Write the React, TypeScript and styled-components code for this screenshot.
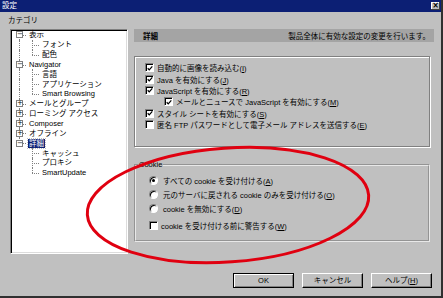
import styled, { createGlobalStyle } from 'styled-components';

const GlobalStyle = createGlobalStyle`
  html, body { margin: 0; padding: 0; background: #c0c0c0; }
  body {
    font-family: "Liberation Sans", "Noto Sans CJK JP", sans-serif;
    font-size: 7.5px;
    color: #000;
  }
  * { box-sizing: border-box; }
`;

type Node = { label: string; level: 0 | 1; exp?: '+' | '-'; lastChild?: boolean; lastRoot?: boolean; firstRoot?: boolean; underLastRoot?: boolean; selected?: boolean };

const tree: Node[] = [
  { label: '表示', level: 0, exp: '-', firstRoot: true },
  { label: 'フォント', level: 1 },
  { label: '配色', level: 1, lastChild: true },
  { label: 'Navigator', level: 0, exp: '-' },
  { label: '言語', level: 1 },
  { label: 'アプリケーション', level: 1 },
  { label: 'Smart Browsing', level: 1, lastChild: true },
  { label: 'メールとグループ', level: 0, exp: '+' },
  { label: 'ローミング アクセス', level: 0, exp: '+' },
  { label: 'Composer', level: 0, exp: '+' },
  { label: 'オフライン', level: 0, exp: '+' },
  { label: '詳細', level: 0, exp: '-', lastRoot: true, selected: true },
  { label: 'キャッシュ', level: 1, underLastRoot: true },
  { label: 'プロキシ', level: 1, underLastRoot: true },
  { label: 'SmartUpdate', level: 1, underLastRoot: true, lastChild: true },
];

const options = [
  { label: '自動的に画像を読み込む', key: 'I', checked: true },
  { label: 'Java を有効にする', key: 'J', checked: true },
  { label: 'JavaScript を有効にする', key: 'R', checked: true },
  { label: 'メールとニュースで JavaScript を有効にする', key: 'M', checked: true, indent: true },
  { label: 'スタイル シートを有効にする', key: 'S', checked: true },
  { label: '匿名 FTP パスワードとして電子メール アドレスを送信する', key: 'E', checked: false },
];

const cookies = [
  { label: 'すべての cookie を受け付ける', key: 'A', on: true },
  { label: '元のサーバに戻される cookie のみを受け付ける', key: 'O', on: false },
  { label: 'cookie を無効にする', key: 'D', on: false },
];

function Caption({ text, hotkey }: { text: string; hotkey: string }) {
  return (
    <span>
      {text}(<u>{hotkey}</u>)
    </span>
  );
}

export default function App() {
  return (
    <>
      <GlobalStyle />
      <Window>
        <TitleBar>
          <span>設定</span>
          <CloseButton>×</CloseButton>
        </TitleBar>
        <Body>
          <LeftColumn>
            <Label>カテゴリ</Label>
            <TreeBox>
              {tree.map((n) => (
                <TreeRow key={n.label}>
                  {n.level === 0 ? (
                    <Cell $up={!n.firstRoot} $down={!n.lastRoot} $right>
                      <Expander>{n.exp === '-' ? '−' : '+'}</Expander>
                    </Cell>
                  ) : (
                    <>
                      <Cell $up={!n.underLastRoot} $down={!n.underLastRoot} />
                      <Cell $up $down={!n.lastChild} $right />
                    </>
                  )}
                  <TreeText $selected={n.selected}>{n.label}</TreeText>
                </TreeRow>
              ))}
            </TreeBox>
          </LeftColumn>
          <RightColumn>
            <Header>
              <strong>詳細</strong>
              <span>製品全体に有効な設定の変更を行います。</span>
            </Header>
            <Group>
              {options.map((o) => (
                <OptionRow key={o.label} $indent={o.indent}>
                  <CheckBox checked={o.checked} />
                  <Caption text={o.label} hotkey={o.key} />
                </OptionRow>
              ))}
            </Group>
            <CookieSet>
              <legend>Cookie</legend>
              {cookies.map((c) => (
                <OptionRow key={c.label} $tall>
                  <Radio $on={c.on} />
                  <Caption text={c.label} hotkey={c.key} />
                </OptionRow>
              ))}
              <OptionRow $tall $gap>
                <CheckBox checked={false} />
                <Caption text="cookie を受け付ける前に警告する" hotkey="W" />
              </OptionRow>
            </CookieSet>
          </RightColumn>
        </Body>
        <ButtonRow>
          <Button $default>OK</Button>
          <Button>キャンセル</Button>
          <Button>
            ヘルプ(<u>H</u>)
          </Button>
        </ButtonRow>
        <Mark viewBox="0 0 443 298" width="443" height="298">
          <ellipse cx="228" cy="205" rx="141" ry="57" transform="rotate(-4 228 205)" fill="none" stroke="#e00010" strokeWidth="3" />
        </Mark>
      </Window>
    </>
  );
}

function CheckBox({ checked }: { checked: boolean }) {
  return (
    <Box>
      {checked && (
        <svg width="7" height="7" viewBox="0 0 7 7">
          <path d="M0.8 3.2 L2.6 5.2 L6.2 1" fill="none" stroke="#000" strokeWidth="1.4" />
        </svg>
      )}
    </Box>
  );
}

const Window = styled.div`
  position: relative;
  width: 443px;
  height: 298px;
  background: #c0c0c0;
  border-right: 2px solid #303030;
  border-bottom: 2px solid #303030;
  display: flex;
  flex-direction: column;
  overflow: hidden;
`;

const TitleBar = styled.div`
  height: 12px;
  background: #0c1f74;
  color: #fff;
  display: flex;
  align-items: center;
  justify-content: space-between;
  padding: 0 1px 0 2px;
  line-height: 12px;
`;

const CloseButton = styled.span`
  width: 9px;
  height: 8px;
  background: #c0c0c0;
  color: #000;
  font-family: "DejaVu Sans", sans-serif;
  font-size: 8px;
  font-weight: bold;
  line-height: 8px;
  text-align: center;
  box-shadow: inset -1px -1px #404040, inset 1px 1px #fff;
`;

const Body = styled.div`
  flex: 1;
  display: flex;
  padding: 4px 0 0 8px;
`;

const LeftColumn = styled.div`
  display: flex;
  flex-direction: column;
`;

const Label = styled.div`
  line-height: 10px;
  height: 10px;
`;

const TreeBox = styled.div`
  margin: 3px 0 0 2px;
  width: 118px;
  height: 225px;
  background: #fff;
  border: 1px solid;
  border-color: #808080 #fff #fff #808080;
  box-shadow: inset 1px 1px #000, inset -1px -1px #dcdcdc;
  padding: 0 0 0 2px;
`;

const TreeRow = styled.div`
  display: flex;
  align-items: center;
  height: 9.85px;
  line-height: 9px;
  white-space: nowrap;
`;

const Cell = styled.span<{ $up?: boolean; $down?: boolean; $right?: boolean }>`
  position: relative;
  flex: none;
  width: 13px;
  height: 100%;
  display: flex;
  align-items: center;
  &::before {
    content: '';
    display: ${(p) => (p.$up || p.$down ? 'block' : 'none')};
    position: absolute;
    left: 6px;
    top: ${(p) => (p.$up ? '0' : '50%')};
    bottom: ${(p) => (p.$down ? '0' : '50%')};
    border-left: 1px dotted #808080;
  }
  &::after {
    content: '';
    display: ${(p) => (p.$right ? 'block' : 'none')};
    position: absolute;
    left: 6px;
    right: 0;
    top: 5px;
    border-top: 1px dotted #808080;
  }
`;

const Expander = styled.span`
  position: relative;
  z-index: 1;
  margin-left: 3px;
  width: 7px;
  height: 7px;
  background: #fff;
  border: 1px solid #808080;
  font-family: "DejaVu Sans", sans-serif;
  font-size: 7px;
  line-height: 5px;
  text-align: center;
  color: #000;
`;

const TreeText = styled.span<{ $selected?: boolean }>`
  margin-left: 2px;
  padding: 0 1px;
  background: ${(p) => (p.$selected ? '#0c1f74' : 'transparent')};
  color: ${(p) => (p.$selected ? '#fff' : '#000')};
  outline: ${(p) => (p.$selected ? '1px dotted #c0c0c0' : 'none')};
`;

const RightColumn = styled.div`
  margin-left: 6px;
  width: 300px;
  display: flex;
  flex-direction: column;
`;

const Header = styled.div`
  margin-top: 13px;
  height: 13px;
  background: #a4a4a4;
  display: flex;
  align-items: center;
  justify-content: space-between;
  padding: 0 4px 0 9px;
  strong { font-weight: bold; }
`;

const Group = styled.div`
  margin-top: 14px;
  width: 296px;
  height: 91px;
  border: 1px solid #808080;
  box-shadow: 1px 1px 0 #fff, inset 1px 1px 0 #fff;
  padding: 5px 0 0 10px;
  display: flex;
  flex-direction: column;
`;

const OptionRow = styled.div<{ $indent?: boolean; $tall?: boolean; $gap?: boolean }>`
  display: flex;
  align-items: center;
  gap: 3px;
  height: ${(p) => (p.$tall ? '14px' : '11.4px')};
  margin-left: ${(p) => (p.$indent ? '19px' : '0')};
  margin-top: ${(p) => (p.$gap ? '3px' : '0')};
  white-space: nowrap;
`;

const Box = styled.span`
  flex: none;
  width: 9px;
  height: 9px;
  background: #fff;
  border: 1px solid;
  border-color: #808080 #fff #fff #808080;
  box-shadow: inset 1px 1px #000;
  display: flex;
  align-items: center;
  justify-content: center;
  svg { margin: 1px 0 0 1px; }
`;

const Radio = styled.span<{ $on?: boolean }>`
  flex: none;
  width: 9px;
  height: 9px;
  margin-right: 2px;
  border-radius: 50%;
  background: #fff;
  border: 1px solid;
  border-color: #808080 #fff #fff #808080;
  box-shadow: inset 1px 1px #000;
  display: flex;
  align-items: center;
  justify-content: center;
  &::after {
    content: '';
    display: ${(p) => (p.$on ? 'block' : 'none')};
    width: 3px;
    height: 3px;
    border-radius: 50%;
    background: #000;
  }
`;

const CookieSet = styled.fieldset`
  margin: 14px 0 0 0;
  width: 296px;
  height: 81px;
  border: 2px groove #e8e8e8;
  padding: 4px 0 0 13px;
  min-width: 0;
  display: flex;
  flex-direction: column;
  legend {
    padding: 0 1px;
    margin-left: -11px;
    line-height: 8px;
  }
`;

const ButtonRow = styled.div`
  display: flex;
  justify-content: flex-end;
  gap: 8px;
  padding: 0 9px 8px 0;
`;

const Button = styled.button<{ $default?: boolean }>`
  width: 61px;
  height: 15px;
  padding: 0;
  font: inherit;
  color: #000;
  background: #c0c0c0;
  border: 1px solid;
  border-color: ${(p) => (p.$default ? '#000' : '#fff #000 #000 #fff')};
  box-shadow: ${(p) =>
    p.$default ? 'inset 1px 1px #fff, inset -1px -1px #808080' : 'inset -1px -1px #808080'};
  line-height: 12px;
`;

const Mark = styled.svg`
  position: absolute;
  left: 0;
  top: 0;
  pointer-events: none;
`;
